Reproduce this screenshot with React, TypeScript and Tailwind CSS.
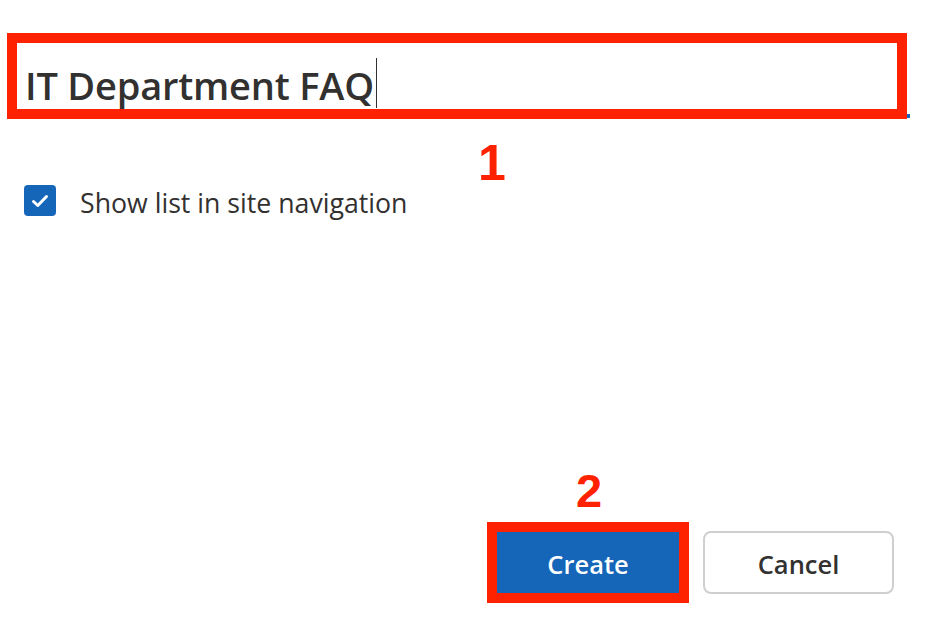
import React from "react";

export default function App() {
  return (
    <div className="relative w-[948px] h-[618px] bg-white overflow-hidden text-[#323130]" style={{ fontFamily: '"Open Sans", "Noto Sans", sans-serif' }}>
      <div className="pt-[33px] pl-[7px]">
        <div className="relative w-[900px] h-[86px] border-[10px] border-[#ff2200] flex items-start pl-[8px]">
          <span className="mt-[23px] text-[38px] font-semibold leading-none tracking-[-0.2px]">IT Department FAQ</span>
          <span className="mt-[15px] ml-[2px] w-[1px] h-[50px] bg-[#323130]" />
          <div className="absolute right-[-13px] bottom-[-9px] w-[3px] h-[4px] bg-[#1565b8]" />
        </div>
      </div>

      <div className="flex items-center pl-[24px] mt-[66px] gap-[24px]">
        <div className="w-[32px] h-[31px] rounded-[4px] bg-[#1565b8] flex items-center justify-center">
          <svg width="20" height="16" viewBox="0 0 20 16" fill="none">
            <path d="M3.5 8.5 L7.8 12.5 L16.5 3.5" stroke="white" strokeWidth="3" strokeLinecap="round" strokeLinejoin="round" />
          </svg>
        </div>
        <span className="pt-[5px] text-[26.7px] leading-none">Show list in site navigation</span>
      </div>

      <div className="absolute left-[478px] top-[138px] text-[50px] font-bold text-[#ff2200] leading-none" style={{ fontFamily: '"Liberation Sans", Arial, sans-serif' }}>1</div>
      <div className="absolute left-[576px] top-[467px] text-[47px] font-bold text-[#ff2200] leading-none" style={{ fontFamily: '"Liberation Sans", Arial, sans-serif' }}>2</div>

      <div className="absolute left-[487px] top-[522px] flex items-center gap-[14px]">
        <div className="border-[10px] border-[#ff2200]">
          <button className="w-[182px] h-[61px] pt-[3px] bg-[#1565b8] text-white text-[25.5px] font-semibold flex items-center justify-center">Create</button>
        </div>
        <button className="w-[191px] h-[63px] pt-[3px] rounded-[8px] border-2 border-[#cfcfcf] bg-white text-[25.5px] font-semibold text-[#323130] flex items-center justify-center">Cancel</button>
      </div>
    </div>
  );
}
